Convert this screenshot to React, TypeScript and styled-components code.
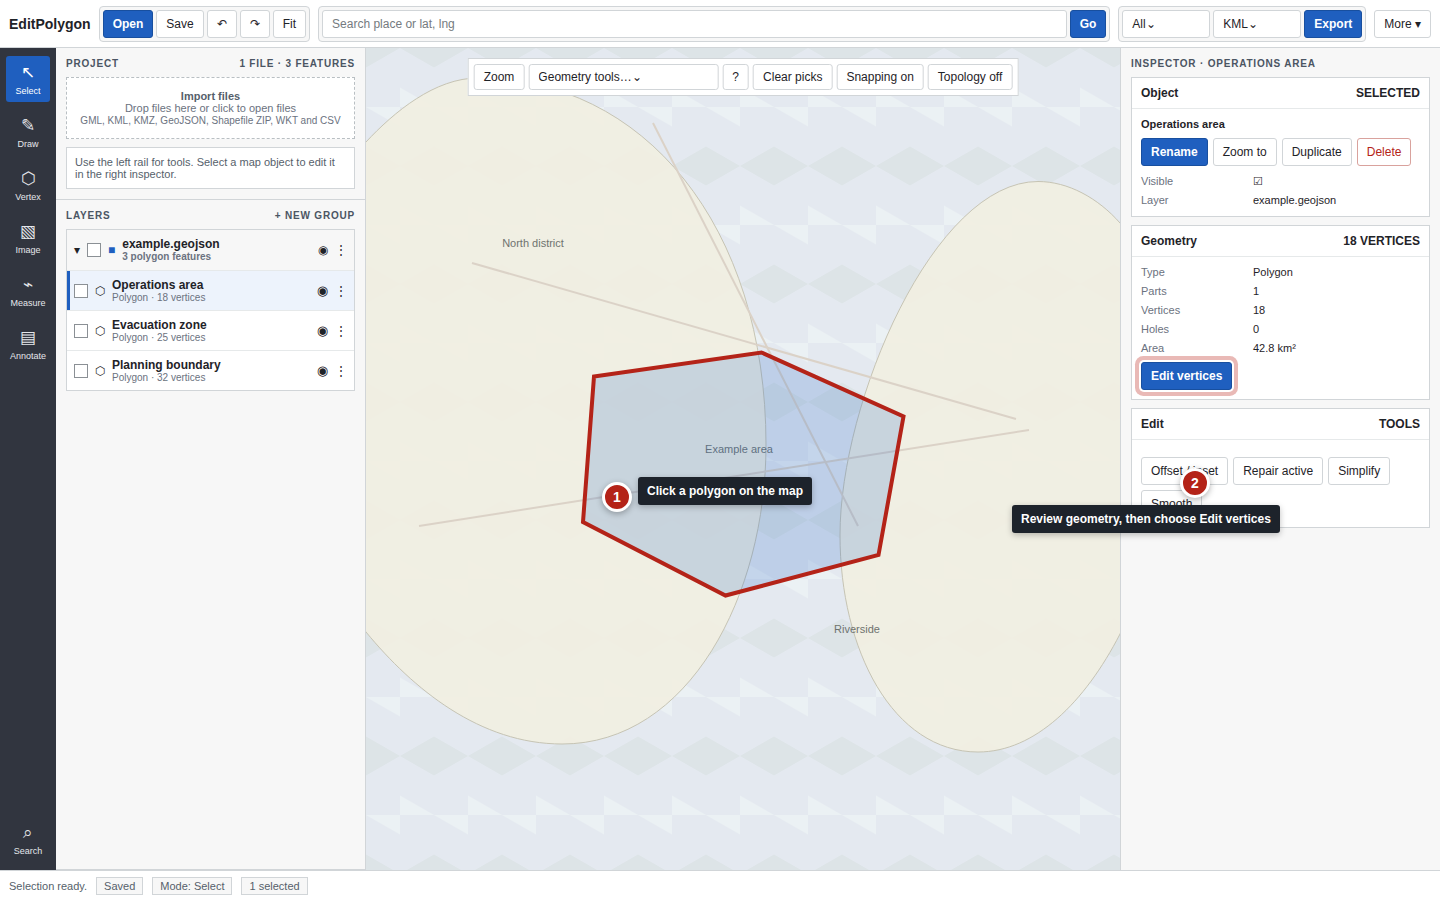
import React from "react";
import styled, { createGlobalStyle, css } from "styled-components";

const color = {
  ink: "#1f2328",
  muted: "#6b7280",
  soft: "#565f6b",
  line: "#d1d5d8",
  faint: "#e6e9ea",
  panel: "#f7f7f7",
  blue: "#1f5fbf",
  red: "#b42318",
  rail: "#31353f",
};

const GlobalStyle = createGlobalStyle`
  * { box-sizing: border-box; }
  body {
    margin: 0;
    background: #fff;
    color: ${color.ink};
    font: 12px/14px "Liberation Sans", Arial, sans-serif;
  }
  button, input, select { font: inherit; color: inherit; margin: 0; }
  p, h1, h2, h3, dl, dd, ul { margin: 0; padding: 0; }
`;

const Shell = styled.div`
  display: grid;
  grid-template-rows: 48px minmax(0, 1fr) 30px;
  height: 100vh;
`;

const TopBar = styled.header`
  display: flex;
  align-items: center;
  gap: 8px;
  padding: 0 9px;
  border-bottom: 1px solid ${color.line};
`;

const Brand = styled.h1`
  font-size: 14px;
  line-height: 16px;
`;

const Group = styled.div<{ $grow?: boolean }>`
  display: flex;
  gap: 3px;
  padding: 3px;
  border: 1px solid ${color.line};
  border-radius: 4px;
  background: ${color.panel};
  ${(p) => p.$grow && "flex: 1;"}
`;

const control = css`
  height: 28px;
  padding: 0 9px;
  border: 1px solid ${color.line};
  border-radius: 3px;
  background: #fff;
`;

type Tone = "primary" | "danger";

const Button = styled.button<{ $tone?: Tone; $small?: boolean; $ring?: boolean }>`
  ${control}
  white-space: nowrap;
  cursor: pointer;
  ${(p) => p.$small && "height: 26px;"}
  ${(p) =>
    p.$tone === "primary" &&
    `background: ${color.blue}; border-color: #184f9f; color: #fff; font-weight: 700;`}
  ${(p) => p.$tone === "danger" && `color: ${color.red}; border-color: #d9a29d;`}
  ${(p) => p.$ring && "box-shadow: 0 0 0 2px #fff, 0 0 0 6px #e9b9b6;"}
`;

const SearchInput = styled.input`
  ${control}
  flex: 1;
  min-width: 0;
  &::placeholder { color: #757b80; opacity: 1; }
`;

const Select = styled.select<{ $wide?: boolean }>`
  ${control}
  appearance: none;
  width: ${(p) => (p.$wide ? 190 : 88)}px;
  ${(p) => p.$wide && "height: 26px;"}
`;

const Workspace = styled.div`
  display: grid;
  grid-template-columns: 56px 310px minmax(0, 1fr) 320px;
  min-height: 0;
`;

const Rail = styled.nav`
  display: flex;
  flex-direction: column;
  gap: 7px;
  padding: 8px 6px;
  background: ${color.rail};
`;

const RailButton = styled.button<{ $active?: boolean; $end?: boolean }>`
  display: flex;
  flex-direction: column;
  align-items: center;
  justify-content: center;
  gap: 4px;
  height: 46px;
  padding: 0;
  border: 0;
  border-radius: 3px;
  background: ${(p) => (p.$active ? color.blue : "transparent")};
  color: ${(p) => (p.$active ? "#fff" : "#e5e7eb")};
  font-size: 9px;
  line-height: 10px;
  ${(p) => p.$end && "margin-top: auto;"}
`;

const RailGlyph = styled.span`
  height: 20px;
  font-size: 17px;
  line-height: 22px;
`;

const Sidebar = styled.aside`
  border-right: 1px solid ${color.line};
  border-bottom: 1px solid ${color.line};
  background: ${color.panel};
`;

const Section = styled.section<{ $ruled?: boolean }>`
  padding: 10px;
  ${(p) => p.$ruled && `border-bottom: 1px solid ${color.line};`}
`;

const SectionHead = styled.div`
  display: flex;
  justify-content: space-between;
  margin-bottom: 7px;
  color: #4b5563;
  font-size: 10px;
  font-weight: 700;
  line-height: 12px;
  letter-spacing: 0.8px;
  text-transform: uppercase;
`;

const SectionTitle = styled.h2`
  font: inherit;
`;

const LinkButton = styled.button`
  padding: 0;
  border: 0;
  background: none;
  font: inherit;
  letter-spacing: inherit;
  text-transform: inherit;
`;

const DropZone = styled.button`
  display: block;
  width: 100%;
  padding: 12px 8px 10px;
  border: 1px dashed #b9bfc3;
  background: #fff;
  color: ${color.muted};
  font-size: 11px;
  line-height: 12px;
`;

const DropLine = styled.span<{ $kind?: "title" | "note" }>`
  display: block;
  ${(p) => p.$kind === "title" && `font-weight: 700; color: ${color.soft};`}
  ${(p) => p.$kind === "note" && "font-size: 10px; line-height: 14px;"}
`;

const Hint = styled.p`
  margin-top: 8px;
  padding: 8px;
  border: 1px solid ${color.line};
  background: #fff;
  color: ${color.soft};
  font-size: 11px;
  line-height: 12px;
`;

const LayerList = styled.ul`
  border: 1px solid ${color.line};
  list-style: none;
  background: #fff;
`;

const LayerRow = styled.li<{ $kind?: "group" | "active" }>`
  display: flex;
  align-items: center;
  gap: 7px;
  height: ${(p) => (p.$kind === "group" ? 41 : 40)}px;
  padding: 0 7px;
  border-bottom: 1px solid ${color.faint};
  &:last-child { height: 39px; border-bottom: 0; }
  ${(p) => p.$kind === "group" && `background: ${color.panel};`}
  ${(p) => p.$kind === "active" && `background: #edf3fc; box-shadow: inset 3px 0 ${color.blue};`}
`;

const Tick = styled.input`
  appearance: none;
  width: 14px;
  height: 14px;
  border: 1px solid #8b9095;
  background: #fff;
`;

const Glyph = styled.span<{ $blue?: boolean }>`
  ${(p) => p.$blue && `color: ${color.blue};`}
`;

const LayerText = styled.div<{ $strong?: boolean }>`
  flex: 1;
  color: ${color.muted};
  font-size: 10px;
  line-height: 11px;
  ${(p) => p.$strong && "padding-bottom: 1px; font-weight: 700;"}
`;

const LayerName = styled.h3`
  color: ${color.ink};
  font-size: 12px;
  line-height: 14px;
`;

const IconButton = styled.button<{ $large?: boolean }>`
  padding: 0;
  border: 0;
  background: none;
  min-width: 11px;
  ${(p) => p.$large && "font-size: 13px;"}
`;

const MapArea = styled.main`
  position: relative;
  overflow: hidden;
  background: #e4e9f0;
`;

const MapLayer = styled.svg`
  position: absolute;
  inset: 0;
  display: block;
  width: 100%;
  height: 100%;
  text { font-size: 11px; fill: #6f736f; text-anchor: middle; }
`;

const MapTools = styled.div`
  position: absolute;
  top: 10px;
  left: 50%;
  transform: translateX(-50%);
  display: flex;
  gap: 4px;
  padding: 5px;
  border: 1px solid ${color.line};
  background: #fff;
`;

const Pin = styled.span<{ $x: string; $y: string }>`
  position: absolute;
  z-index: 3;
  left: ${(p) => p.$x};
  top: ${(p) => p.$y};
  width: 30px;
  height: 30px;
  border: 3px solid #fff;
  border-radius: 50%;
  background: ${color.red};
  box-shadow: 0 2px 6px rgba(0, 0, 0, 0.3);
  color: #fff;
  font-size: 14px;
  font-weight: 700;
  line-height: 24px;
  text-align: center;
`;

const Callout = styled.span<{ $x: string; $y: string }>`
  position: absolute;
  z-index: 2;
  left: ${(p) => p.$x};
  top: ${(p) => p.$y};
  padding: 7px 9px;
  border-radius: 3px;
  background: #1d232b;
  box-shadow: 0 2px 6px rgba(0, 0, 0, 0.25);
  color: #fff;
  font-weight: 700;
  white-space: nowrap;
`;

const Inspector = styled.aside`
  position: relative;
  display: flex;
  flex-direction: column;
  padding: 10px;
  border-left: 1px solid ${color.line};
  background: ${color.panel};
`;

const Card = styled.section`
  margin-bottom: 8px;
  border: 1px solid ${color.line};
  background: #fff;
`;

const CardHead = styled.div`
  display: flex;
  justify-content: space-between;
  padding: 8px 9px;
  border-bottom: 1px solid ${color.faint};
  font-weight: 700;
`;

const CardTitle = styled.h3`
  font: inherit;
`;

const CardBody = styled.div`
  padding: 9px;
`;

const ObjectName = styled.p`
  font-size: 11px;
  font-weight: 700;
  line-height: 13px;
`;

const Actions = styled.div<{ $space: number }>`
  display: flex;
  flex-wrap: wrap;
  gap: 5px;
  margin-top: ${(p) => p.$space}px;
`;

const Facts = styled.dl<{ $spaced?: boolean }>`
  display: grid;
  grid-template-columns: 106px 1fr;
  align-items: end;
  gap: 6px;
  font-size: 11px;
  line-height: 13px;
  ${(p) => p.$spaced && "margin-top: 8px;"}
`;

const Term = styled.dt`
  color: ${color.muted};
`;

const CheckMark = styled.dd`
  line-height: 14px;
`;

const StatusBar = styled.footer`
  display: flex;
  align-items: center;
  gap: 9px;
  padding: 0 9px;
  border-top: 1px solid ${color.line};
  color: ${color.soft};
  font-size: 11px;
`;

const Chip = styled.span`
  padding: 1px 7px;
  border: 1px solid ${color.line};
  background: ${color.panel};
`;

const tools = [
  ["↖", "Select"],
  ["✎", "Draw"],
  ["⬡", "Vertex"],
  ["▧", "Image"],
  ["⌁", "Measure"],
  ["▤", "Annotate"],
  ["⌕", "Search"],
];

const layers = [
  ["Operations area", 18],
  ["Evacuation zone", 25],
  ["Planning boundary", 32],
] as const;

const geometry = [
  ["Type", "Polygon"],
  ["Parts", "1"],
  ["Vertices", "18"],
  ["Holes", "0"],
  ["Area", "42.8 km²"],
];

function MapCanvas() {
  return (
    <>
      <MapLayer aria-hidden="true">
        <defs>
          <pattern id="terrain" width="68" height="118" patternUnits="userSpaceOnUse">
            <path
              fill="#dde4e7"
              d="M0 0H68L34 0L0 19.6ZM68 0V19.6L34 0ZM0 118V98.4L34 118ZM68 118V98.4L34 118Z"
            />
            <path fill="#ebf1f4" d="M34 39.4V59H68ZM34 78.6V59H0Z" />
          </pattern>
        </defs>
        <rect width="100%" height="100%" fill="url(#terrain)" />
      </MapLayer>
      <MapLayer viewBox="366 48 754 822" preserveAspectRatio="xMidYMid slice">
        <g fill="#f0eee2" fillOpacity="0.96" stroke="#c6c4b4">
          <path d="M340 175C348 162 366 142 366 142C394 112 435 78 478 78C643 78 766 225 766 445C766 595 689 744 562 744C480 744 413 689 366 632L340 596Z" />
          <path d="M1038 181.5C934 181.5 840 402 840 535C840 650 893 752 978 752C1035 752 1085 702 1120 634L1140 590V245L1120 223C1098 198 1068 181.5 1038 181.5Z" />
        </g>
        <g stroke="#dbd2c7" strokeWidth="2">
          <path d="M653 123L858 526" />
          <path d="M472 263L1016 419" />
          <path d="M419 526L1029 430" />
        </g>
        <text x="533" y="247">North district</text>
        <text x="739" y="453">Example area</text>
        <text x="857" y="633">Riverside</text>
        <path
          d="M594 376.5L761.5 352.5L903.5 416.5L878.5 555L725.5 595.5L583 522Z"
          fill="#2868c8"
          fillOpacity="0.2"
          stroke={color.red}
          strokeWidth="4"
        />
      </MapLayer>
    </>
  );
}

export default function App() {
  return (
    <Shell>
      <GlobalStyle />
      <TopBar>
        <Brand>EditPolygon</Brand>
        <Group>
          <Button $tone="primary">Open</Button>
          <Button>Save</Button>
          <Button aria-label="Undo">↶</Button>
          <Button aria-label="Redo">↷</Button>
          <Button>Fit</Button>
        </Group>
        <Group $grow>
          <SearchInput aria-label="Search place" placeholder="Search place or lat, lng" />
          <Button $tone="primary">Go</Button>
        </Group>
        <Group>
          <Select aria-label="Export scope">
            <option>All⌄</option>
          </Select>
          <Select aria-label="Export format">
            <option>KML⌄</option>
          </Select>
          <Button $tone="primary">Export</Button>
        </Group>
        <Button>More ▾</Button>
      </TopBar>

      <Workspace>
        <Rail aria-label="Tools">
          {tools.map(([glyph, label]) => (
            <RailButton key={label} $active={label === "Select"} $end={label === "Search"}>
              <RailGlyph>{glyph}</RailGlyph>
              {label}
            </RailButton>
          ))}
        </Rail>

        <Sidebar>
          <Section $ruled>
            <SectionHead>
              <SectionTitle>Project</SectionTitle>
              <span>1 file · 3 features</span>
            </SectionHead>
            <DropZone>
              <DropLine $kind="title">Import files</DropLine>
              <DropLine>Drop files here or click to open files</DropLine>
              <DropLine $kind="note">GML, KML, KMZ, GeoJSON, Shapefile ZIP, WKT and CSV</DropLine>
            </DropZone>
            <Hint>Use the left rail for tools. Select a map object to edit it in the right inspector.</Hint>
          </Section>
          <Section>
            <SectionHead>
              <SectionTitle>Layers</SectionTitle>
              <LinkButton>+ New group</LinkButton>
            </SectionHead>
            <LayerList>
              <LayerRow $kind="group">
                <Glyph>▾</Glyph>
                <Tick type="checkbox" aria-label="example.geojson" />
                <Glyph $blue>■</Glyph>
                <LayerText $strong>
                  <LayerName>example.geojson</LayerName>
                  3 polygon features
                </LayerText>
                <IconButton aria-label="Toggle visibility">◉</IconButton>
                <IconButton aria-label="More options">⋮</IconButton>
              </LayerRow>
              {layers.map(([name, count], i) => (
                <LayerRow key={name} $kind={i === 0 ? "active" : undefined}>
                  <Tick type="checkbox" aria-label={name} />
                  <Glyph>⬡</Glyph>
                  <LayerText>
                    <LayerName>{name}</LayerName>
                    Polygon · {count} vertices
                  </LayerText>
                  <IconButton $large aria-label="Toggle visibility">◉</IconButton>
                  <IconButton aria-label="More options">⋮</IconButton>
                </LayerRow>
              ))}
            </LayerList>
          </Section>
        </Sidebar>

        <MapArea>
          <MapCanvas />
          <MapTools>
            <Button $small>Zoom</Button>
            <Select $wide aria-label="Geometry tools">
              <option>Geometry tools…⌄</option>
            </Select>
            <Button $small>?</Button>
            <Button $small>Clear picks</Button>
            <Button $small>Snapping on</Button>
            <Button $small>Topology off</Button>
          </MapTools>
          <Pin $x="calc(50% - 141px)" $y="calc(50% + 23px)">1</Pin>
          <Callout $x="calc(50% - 105px)" $y="calc(50% + 18px)">Click a polygon on the map</Callout>
        </MapArea>

        <Inspector>
          <SectionHead>
            <SectionTitle>Inspector · Operations area</SectionTitle>
          </SectionHead>
          <Card>
            <CardHead>
              <CardTitle>Object</CardTitle>
              <span>SELECTED</span>
            </CardHead>
            <CardBody>
              <ObjectName>Operations area</ObjectName>
              <Actions $space={7}>
                <Button $tone="primary">Rename</Button>
                <Button>Zoom to</Button>
                <Button>Duplicate</Button>
                <Button $tone="danger">Delete</Button>
              </Actions>
              <Facts $spaced>
                <Term>Visible</Term>
                <CheckMark>☑</CheckMark>
                <Term>Layer</Term>
                <dd>example.geojson</dd>
              </Facts>
            </CardBody>
          </Card>
          <Card>
            <CardHead>
              <CardTitle>Geometry</CardTitle>
              <span>18 VERTICES</span>
            </CardHead>
            <CardBody>
              <Facts>
                {geometry.map(([term, value]) => (
                  <React.Fragment key={term}>
                    <Term>{term}</Term>
                    <dd>{value}</dd>
                  </React.Fragment>
                ))}
              </Facts>
              <Actions $space={7}>
                <Button $tone="primary" $ring>Edit vertices</Button>
              </Actions>
            </CardBody>
          </Card>
          <Card>
            <CardHead>
              <CardTitle>Edit</CardTitle>
              <span>TOOLS</span>
            </CardHead>
            <CardBody>
              <Actions $space={8}>
                <Button>Offset / inset</Button>
                <Button>Repair active</Button>
                <Button>Simplify</Button>
                <Button>Smooth</Button>
              </Actions>
            </CardBody>
          </Card>
          <Pin $x="59px" $y="420px">2</Pin>
          <Callout $x="-109px" $y="457px">Review geometry, then choose Edit vertices</Callout>
        </Inspector>
      </Workspace>

      <StatusBar>
        <span>Selection ready.</span>
        <Chip>Saved</Chip>
        <Chip>Mode: Select</Chip>
        <Chip>1 selected</Chip>
      </StatusBar>
    </Shell>
  );
}
